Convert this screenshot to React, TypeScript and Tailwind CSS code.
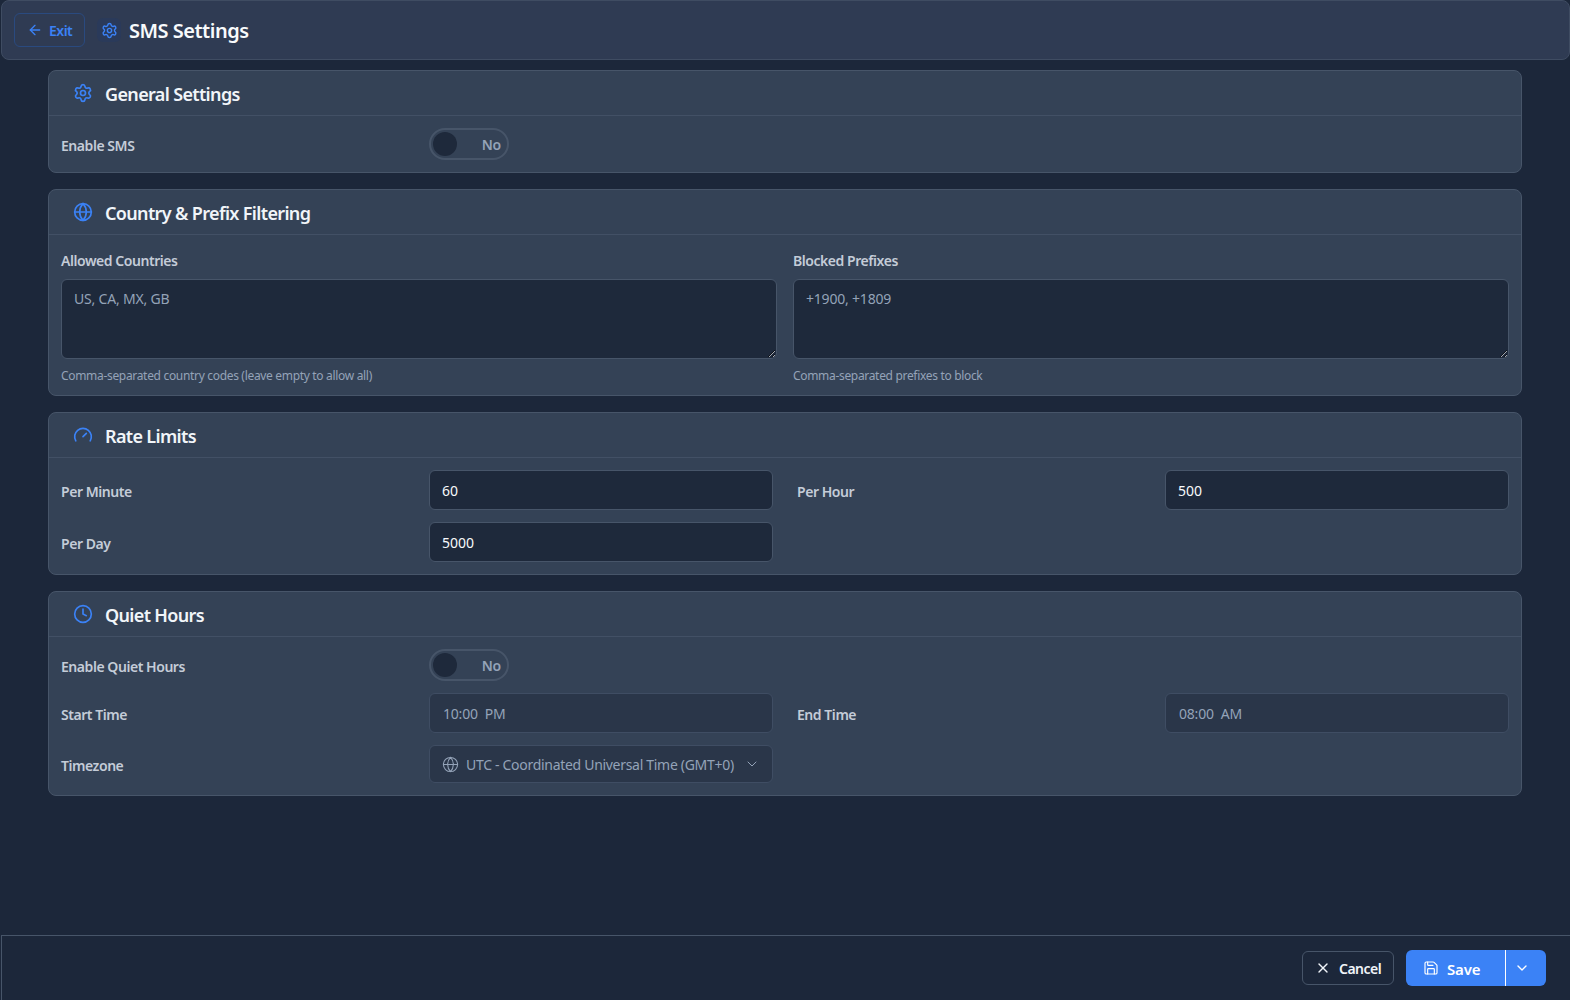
import React from "react";
import { ArrowLeft, Settings, Globe, Gauge, Clock, ChevronDown, X, Save } from "lucide-react";

function Card({ icon, title, children }: { icon: React.ReactNode; title: string; children: React.ReactNode }) {
  return (
    <section className="rounded-lg border border-[#475569] bg-[#344256]">
      <div className="flex h-[45px] items-center border-b border-[#425065] pl-6">
        <span className="flex w-[32px] text-[#3b82f6]">{icon}</span>
        <h2 className="translate-y-px text-[18px] font-semibold leading-7 tracking-[-0.65px] text-[#f1f5f9]">{title}</h2>
      </div>
      <div className="p-3">{children}</div>
    </section>
  );
}

function Toggle() {
  return (
    <div className="flex h-[32px] w-[80px] items-center justify-between rounded-full border-2 border-[#475569] pl-[2px] pr-[6px]">
      <span className="size-[24px] rounded-full bg-[#1e293b]" />
      <span className="translate-y-px text-sm font-semibold tracking-[-0.2px] text-[#94a3b8]">No</span>
    </div>
  );
}

function Label({ children, className = "" }: { children: React.ReactNode; className?: string }) {
  return <label className={"text-[14px] font-semibold leading-5 tracking-[-0.45px] text-[#c4ccd8] " + className}>{children}</label>;
}

function Field({ label, value, disabled }: { label: string; value: string; disabled?: boolean }) {
  return (
    <div className="flex items-center">
      <Label className="w-[368px] shrink-0 translate-y-[2px]">{label}</Label>
      <input
        readOnly
        disabled={disabled}
        value={value}
        className={
          "h-10 min-w-0 flex-1 rounded-md border px-3 text-sm outline-none " +
          (disabled
            ? "border-[#3f4d63] bg-[#2a3649] pl-[13px] tracking-[-0.2px] text-[#94a3b8]"
            : "border-[#475569] bg-[#1e293b] text-[#f8fafc]")
        }
      />
    </div>
  );
}

function Area({ label, placeholder, help }: { label: string; placeholder: string; help: string }) {
  return (
    <div className="flex flex-col pt-1">
      <Label className="mb-2 leading-5">{label}</Label>
      <textarea
        placeholder={placeholder}
        className="h-[80px] w-full rounded-md border border-[#475569] bg-[#1e293b] px-3 pb-2 pt-[9px] text-sm leading-5 tracking-[-0.2px] text-[#f8fafc] outline-none placeholder:text-[#94a3b8]"
      />
      <p className="mt-[9px] text-xs leading-[15px] tracking-[-0.32px] text-[#94a3b8]">{help}</p>
    </div>
  );
}

export default function App() {
  return (
    <div className="flex h-[1000px] flex-col overflow-hidden bg-[#1c273a] font-['Noto_Sans',sans-serif]">
      <header className="ml-px flex h-[60px] shrink-0 items-center rounded-lg border border-[#3f4c62] bg-[#2f3b53] pl-[12px]">
        <button className="flex h-[34px] w-[71px] items-center gap-[6px] rounded-md border border-[#2a4a7f] pl-[12px] text-[14px] font-semibold tracking-[-0.5px] text-[#3b82f6]">
          <ArrowLeft size={16} strokeWidth={2} />
          Exit
        </button>
        <span className="ml-[12px] flex size-[24px] items-center justify-center rounded-md bg-[#2a3a5a] text-[#3b82f6]">
          <Settings size={17} strokeWidth={2} />
        </span>
        <h1 className="ml-[8px] translate-y-px text-[20px] font-semibold leading-7 tracking-[-0.5px] text-[#f8fafc]">SMS Settings</h1>
      </header>

      <main className="mx-[48px] mt-[10px] flex flex-col gap-[16px]">
        <Card icon={<Settings size={20} />} title="General Settings">
          <div className="flex items-center">
            <Label className="w-[368px] shrink-0 translate-y-[2px]">Enable SMS</Label>
            <Toggle />
          </div>
        </Card>

        <Card icon={<Globe size={20} />} title="Country & Prefix Filtering">
          <div className="grid grid-cols-2 gap-4">
            <Area label="Allowed Countries" placeholder="US, CA, MX, GB" help="Comma-separated country codes (leave empty to allow all)" />
            <Area label="Blocked Prefixes" placeholder="+1900, +1809" help="Comma-separated prefixes to block" />
          </div>
        </Card>

        <Card icon={<Gauge size={20} />} title="Rate Limits">
          <div className="grid grid-cols-2 gap-x-6 gap-y-3">
            <Field label="Per Minute" value="60" />
            <Field label="Per Hour" value="500" />
            <Field label="Per Day" value="5000" />
          </div>
        </Card>

        <Card icon={<Clock size={20} />} title="Quiet Hours">
          <div className="grid grid-cols-2 gap-x-6 gap-y-3">
            <div className="col-span-2 flex items-center">
              <Label className="w-[368px] shrink-0 translate-y-[2px]">Enable Quiet Hours</Label>
              <Toggle />
            </div>
            <Field label="Start Time" value="10:00  PM" disabled />
            <Field label="End Time" value="08:00  AM" disabled />
            <div className="flex items-center">
              <Label className="w-[368px] shrink-0 translate-y-[2px]">Timezone</Label>
              <div className="flex h-[38px] min-w-0 flex-1 items-center rounded-md border border-[#3f4d63] bg-[#2a3649] pl-[12px] pr-[12px] text-sm tracking-[-0.3px] text-[#94a3b8]">
                <Globe size={17} strokeWidth={1.5} className="shrink-0" />
                <span className="ml-[7px] flex-1 translate-y-px whitespace-nowrap">UTC - Coordinated Universal Time (GMT+0)</span>
                <ChevronDown size={16} strokeWidth={1.5} className="shrink-0" />
              </div>
            </div>
          </div>
        </Card>
      </main>

      <footer className="ml-px mt-auto flex h-[65px] items-center justify-end border-l border-t border-[#475569] pr-[24px]">
        <button className="flex h-[34px] w-[92px] items-center gap-[8px] rounded-md border border-[#475569] pl-[12px] text-[14px] font-semibold tracking-[-0.5px] text-[#f1f5f9]">
          <X size={16} />
          Cancel
        </button>
        <div className="ml-[12px] flex h-[36px] w-[140px] items-center rounded-md bg-[#3b82f6] text-white">
          <button className="flex h-full w-[99px] items-center gap-[8px] pl-[17px] text-[15px] font-semibold tracking-[-0.2px]">
            <Save size={16} strokeWidth={1.75} />
            <span className="translate-y-px">Save</span>
          </button>
          <span className="h-full w-px bg-white" />
          <button className="flex h-full flex-1 items-center justify-center pr-[9px]">
            <ChevronDown size={16} />
          </button>
        </div>
      </footer>
    </div>
  );
}
